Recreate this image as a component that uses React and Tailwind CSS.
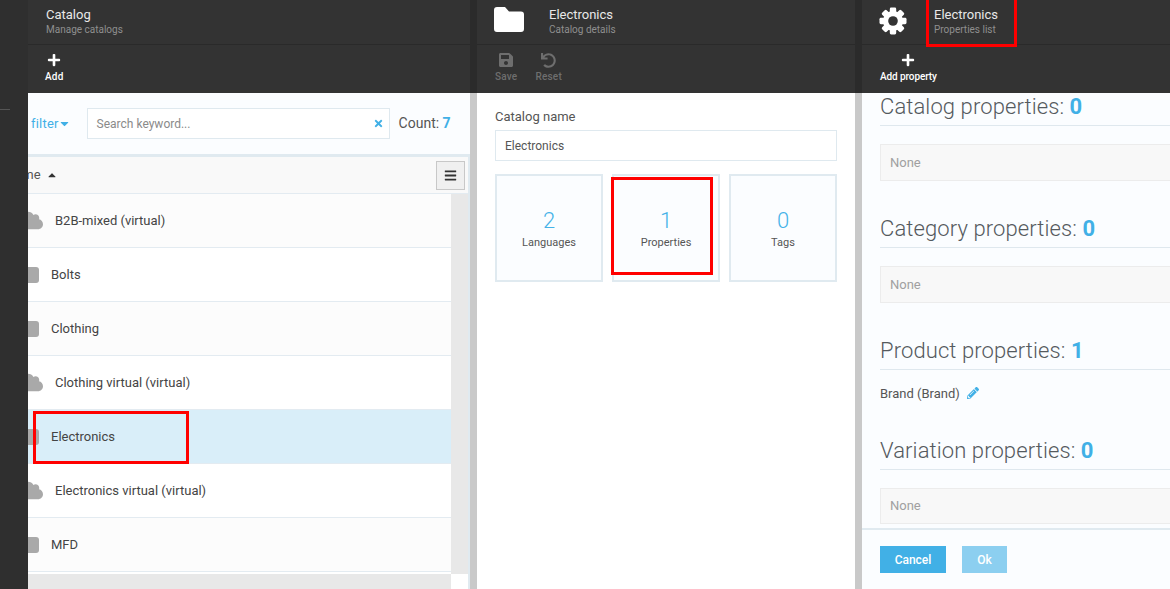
import React from "react";
import { FaSave, FaUndo, FaPlus, FaTimes, FaBars, FaPencilAlt, FaCaretDown, FaCaretUp, FaCloud } from "react-icons/fa";

const FolderIcon = () => (
  <svg width="30" height="25" viewBox="0 0 30 25" className="mt-[7px] mr-[25px] -ml-px shrink-0" fill="#fff">
    <path d="M3 0h8l4 4.5h12a3 3 0 0 1 3 3V22a3 3 0 0 1-3 3H3a3 3 0 0 1-3-3V3a3 3 0 0 1 3-3z" />
  </svg>
);

const GearIcon = () => (
  <svg width="28" height="28" viewBox="0 0 28 28" className="mt-[7px] mr-[27px] -ml-px shrink-0" fill="#fff">
    {[0, 45, 90, 135, 180, 225, 270, 315].map((a) => (
      <rect key={a} x="10.8" y="0.5" width="6.4" height="8" rx="1.4" transform={`rotate(${a} 14 14)`} />
    ))}
    <circle cx="14" cy="14" r="10" />
    <circle cx="14" cy="14" r="4.8" fill="#333333" />
  </svg>
);

const Head = ({ icon, title, sub }) => (
  <div className="h-[45px] flex items-start border-b border-[#2a2a2a] pl-[18px]">
    {icon}
    <div className="pt-[7px]">
      <div className="text-[13px] leading-[16px] text-[#e8e8e8]">{title}</div>
      <div className="text-[10px] leading-[14px] text-[#8f8f8f]">{sub}</div>
    </div>
  </div>
);

const Tool = ({ icon, label, dim, labelClass = "tracking-[0.2px]" }) => (
  <div className={`flex flex-col items-center pt-[7px] ${dim ? "text-[#6e6e6e]" : "text-white"}`}>
    <div className="h-[16px] flex items-center">{icon}</div>
    <div className={`text-[10px] leading-[12px] mt-[3px] font-medium ${labelClass}`}>{label}</div>
  </div>
);

const rows = [
  ["B2B-mixed (virtual)", true],
  ["Bolts", false],
  ["Clothing", false],
  ["Clothing virtual (virtual)", true],
  ["Electronics", false, true],
  ["Electronics virtual (virtual)", true],
  ["MFD", false],
];

const Row = ({ name, cloud, sel, odd }) => (
  <div className={`h-[54px] shrink-0 border-b border-[#e3ebf1] flex items-center text-[13px] text-[#444] overflow-hidden ${sel ? "bg-[#d9eef9]" : odd ? "bg-[#fcfcfc]" : "bg-white"}`}>
    {cloud ? (
      <>
        <FaCloud className="text-[#a9a9a9] text-[25px] shrink-0 -ml-[10px]" />
        <span className="ml-[12px]">{name}</span>
      </>
    ) : (
      <>
        <div className="w-[11px] h-[16px] bg-[#a9a9a9] rounded-r-[3px] shrink-0" />
        <span className="ml-[12px]">{name}</span>
      </>
    )}
  </div>
);

const Section = ({ title, n, className = "" }) => (
  <div className={`h-[33px] shrink-0 ml-[18px] border-b border-[#dfe8ee] text-[22px] leading-[28px] font-light tracking-[0.1px] text-[#555a5e] whitespace-nowrap ${className}`}>
    {title}: <span className="font-bold text-[#41b0e6]">{n}</span>
  </div>
);

const None = ({ className = "" }) => (
  <div className={`ml-[18px] -mr-[10px] shrink-0 border border-[#ececec] bg-[#f8f8f8] flex items-center pl-[9px] text-[13px] text-[#a0a0a0] ${className}`}>None</div>
);

const Tile = ({ n, label }) => (
  <div className="flex-1 h-[108px] border-2 border-[#e0eaf0] bg-[#fbfdff] flex flex-col items-center justify-center pt-[4px]">
    <div className="text-[22px] leading-[24px] font-light text-[#45b2e8]">{n}</div>
    <div className="text-[11px] leading-[16px] text-[#555] mt-[2px]">{label}</div>
  </div>
);

export default function App() {
  return (
    <div className="relative flex h-[589px] w-[1170px] overflow-hidden bg-[#fafcff]" style={{ fontFamily: "Roboto, 'Liberation Sans', sans-serif" }}>
      <div className="w-[28px] shrink-0 bg-[#2f2f2f] pt-[109px]">
        <div className="h-px w-[10px] bg-[#555]" />
      </div>

      {/* Catalog blade */}
      <div className="w-[449px] shrink-0 flex flex-col">
        <div className="h-[93px] shrink-0 bg-[#333333] border-r-[7px] border-[#2b2b2b]">
          <Head title="Catalog" sub="Manage catalogs" />
          <div className="flex pl-[17px]">
            <Tool icon={<FaPlus className="text-[14px]" />} label="Add" />
          </div>
        </div>
        <div className="flex-1 min-h-0 flex flex-col border-r-[7px] border-[#c9c9c9]">
          <div className="h-[61px] shrink-0 flex items-center bg-[#fbfdff] pl-[3px]">
            <span className="text-[13px] tracking-[0.2px] text-[#41b0e6]">filter</span>
            <FaCaretDown className="text-[#41b0e6] text-[13px] -ml-px" />
            <div className="ml-[16px] w-[303px] h-[31px] border border-[#dfe9ef] bg-white flex items-center justify-between pl-[9px] pr-[5px] text-[12px] text-[#8a8a8a]">
              <span>Search keyword...</span>
              <FaTimes className="text-[#41b0e6] text-[11px]" />
            </div>
            <span className="ml-[9px] text-[14px] text-[#555]">Count: <span className="font-bold text-[#41b0e6]">7</span></span>
          </div>
          <div className="flex-1 min-h-0 flex flex-col border-t-[3px] border-r-2 border-[#e0eaf0] overflow-hidden">
            <div className="h-[37px] shrink-0 bg-[#f9f9f9] border-b border-[#e3ebf1] flex items-center justify-between overflow-hidden pr-[3px]">
              <div className="flex items-center text-[13px] text-[#555]">
                <span className="-ml-[22px]">Name</span>
                <FaCaretUp className="ml-[5px] text-[#333] text-[12px]" />
              </div>
              <div className="w-[29px] h-[29px] border border-[#c8c8c8] bg-[#f0f0f0] flex items-center justify-center">
                <FaBars className="text-[#333] text-[13px]" />
              </div>
            </div>
            <div className="flex flex-1 min-h-0">
              <div className="w-[423px] shrink-0 flex flex-col">
                {rows.map(([n, c, s], i) => (
                  <Row key={n} name={n} cloud={c} sel={s} odd={i % 2 === 0} />
                ))}
                <div className="flex-1 bg-white" />
                <div className="h-[15px] shrink-0 bg-[#e8e8e8]" />
              </div>
              <div className="w-[17px] shrink-0 flex flex-col">
                <div className="flex-1 bg-[#e8e8e8]" />
                <div className="h-[15px] shrink-0 bg-white" />
              </div>
            </div>
          </div>
        </div>
      </div>

      {/* Details blade */}
      <div className="w-[385px] shrink-0 flex flex-col">
        <div className="h-[93px] shrink-0 bg-[#333333] border-r-[7px] border-[#2b2b2b]">
          <Head icon={<FolderIcon />} title="Electronics" sub="Catalog details" />
          <div className="flex pl-[18px] gap-[18px]">
            <Tool dim icon={<FaSave className="text-[16px]" />} label="Save" />
            <Tool dim icon={<FaUndo className="text-[15px]" />} label="Reset" />
          </div>
        </div>
        <div className="flex-1 px-[18px] pt-[16px] bg-white border-r-[7px] border-[#c9c9c9]">
          <div className="text-[13px] leading-[16px] text-[#555]">Catalog name</div>
          <div className="mt-[5px] h-[31px] border border-[#dfe9ef] flex items-center pl-[9px] text-[12px] text-[#555]">Electronics</div>
          <div className="mt-[13px] flex gap-[9px]">
            <Tile n="2" label="Languages" />
            <Tile n="1" label="Properties" />
            <Tile n="0" label="Tags" />
          </div>
        </div>
      </div>

      {/* Properties blade */}
      <div className="flex-1 min-w-0 flex flex-col bg-[#fbfdff]">
        <div className="h-[93px] shrink-0 bg-[#333333]">
          <Head icon={<GearIcon />} title="Electronics" sub="Properties list" />
          <div className="flex pl-[18px]">
            <Tool icon={<FaPlus className="text-[14px]" />} label="Add property" labelClass="tracking-[-0.1px]" />
          </div>
        </div>
        <div className="flex-1 min-h-0 flex flex-col overflow-hidden">
          <Section title="Catalog properties" n="0" />
          <None className="mt-[18px] h-[37px]" />
          <Section title="Category properties" n="0" className="mt-[34px]" />
          <None className="mt-[18px] h-[37px]" />
          <Section title="Product properties" n="1" className="mt-[34px]" />
          <div className="pl-[18px] mt-[16px] flex items-center text-[13px] text-[#555] h-[16px] shrink-0">
            Brand (Brand)
            <FaPencilAlt className="ml-[7px] text-[#41b0e6] text-[12px] -mt-[3px]" />
          </div>
          <Section title="Variation properties" n="0" className="mt-[35px]" />
          <None className="mt-[18px] h-[36px]" />
        </div>
        <div className="h-[61px] shrink-0 border-t-2 border-[#e0eaf0] flex items-start pl-[18px] pt-[16px] gap-[16px]">
          <button className="w-[66px] h-[27px] bg-[#41b0e6] text-white text-[12px] font-medium">Cancel</button>
          <button className="w-[45px] h-[27px] bg-[#8ccff0] text-white text-[12px] font-medium">Ok</button>
        </div>
      </div>

      {/* Red annotation boxes */}
      <div className="absolute left-[33px] top-[411px] w-[156px] h-[53px] border-[3px] border-[#ff0000]" />
      <div className="absolute left-[611px] top-[177px] w-[102px] h-[98px] border-[3px] border-[#ff0000]" />
      <div className="absolute left-[926px] top-[-3px] w-[91px] h-[50px] border-[3px] border-[#ff0000]" />
    </div>
  );
}
